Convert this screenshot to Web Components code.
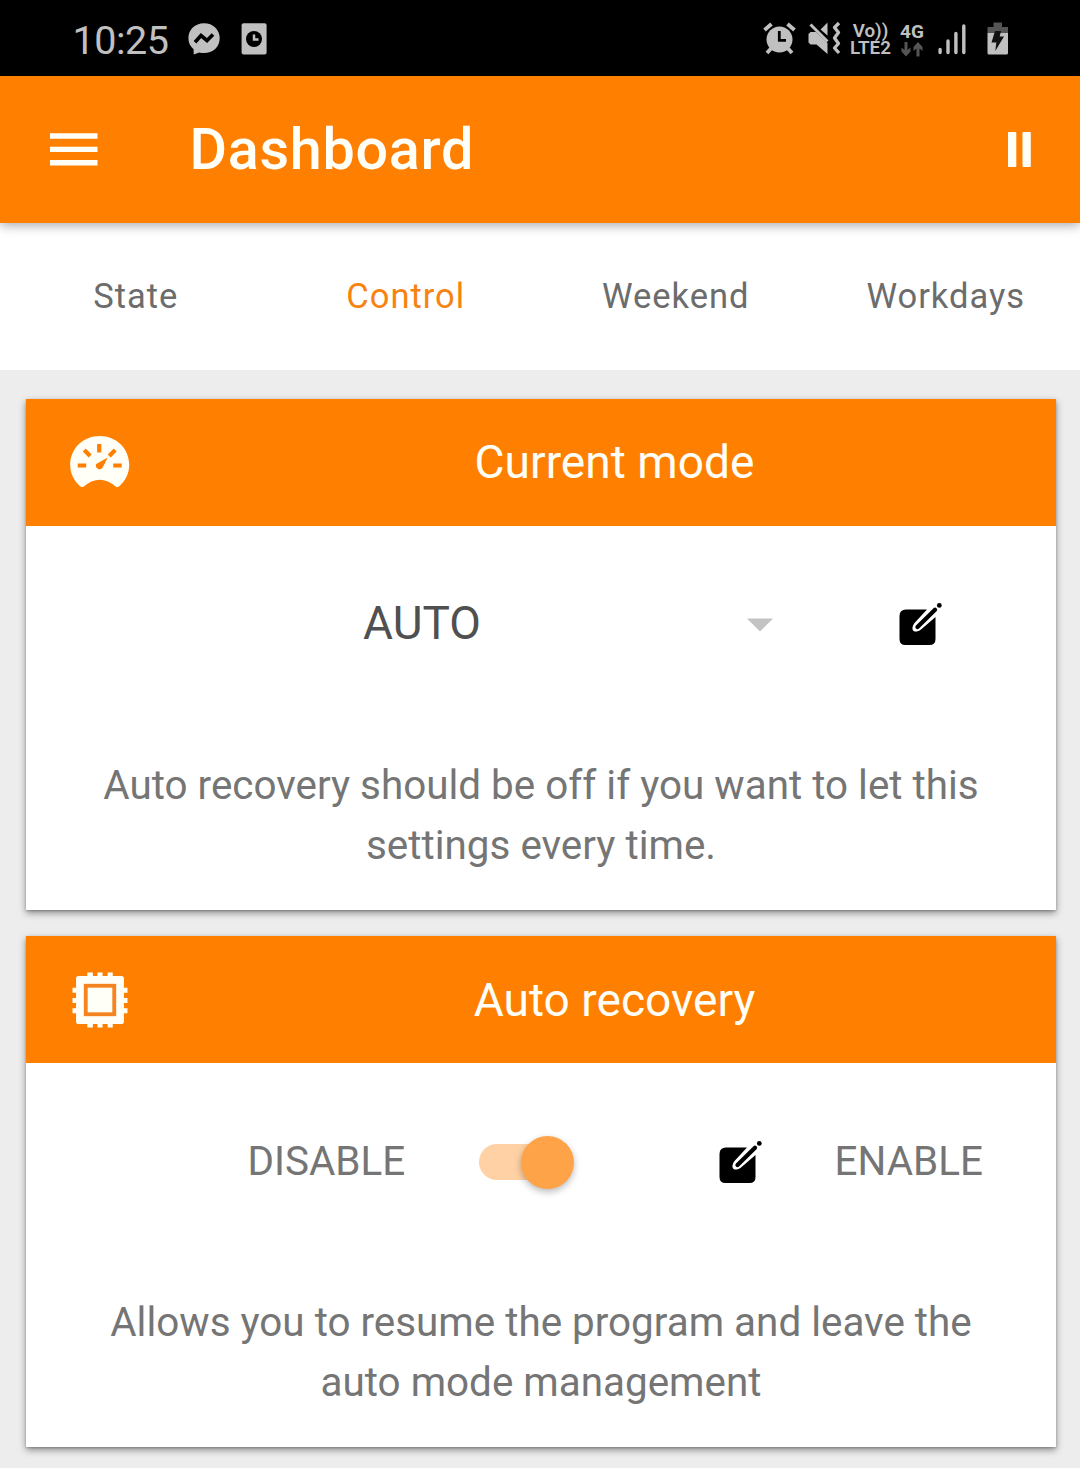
<!DOCTYPE html>
<html lang="en">
<head>
<meta charset="utf-8">
<title>Dashboard</title>
<style>
html,body{margin:0;padding:0}
body{width:1080px;height:1468px;overflow:hidden;background:#ededed;font-family:Roboto,"Liberation Sans",sans-serif}
</style>
</head>
<body>
<dashboard-app></dashboard-app>
<script>
const define = (name, html) => {
  const t = document.createElement('template');
  t.innerHTML = html;
  customElements.define(name, class extends HTMLElement {
    constructor() {
      super();
      this.attachShadow({ mode: 'open' }).appendChild(t.content.cloneNode(true));
    }
  });
};

define('status-bar', `
<style>
:host{display:flex;box-sizing:border-box;height:76px;background:#000;color:#c0c0c0;padding:0 70px 0 72.500px;align-items:flex-start}
.time{font-size:39.5px;line-height:46px;margin-top:18px;width:115.500px;letter-spacing:-.5px;white-space:nowrap}
svg{display:block;flex:none;margin-top:20px;fill:#c0c0c0}
.sp{flex:1}
.lte{width:45px;margin-left:6px;margin-top:23px;font-weight:600;font-size:18.800px;line-height:17px;text-align:center;white-space:pre}
.g{width:28px;margin-left:5px;margin-top:22px;font-weight:700;font-size:19px;line-height:19px;text-align:center}
.g svg{margin:1px auto 0;fill:#555}
</style>
<div class="time">10:25</div>
<svg width="32" height="36" viewBox="0 0 32 36"><path d="M16 3.3C7 3.3.4 9.7.4 18.3c0 4.4 2 8.3 5.200 11l.1 5.300 5.600-2.100c1.500.4 3.100.6 4.700.6 9 0 15.700-6.300 15.700-14.900S25 3.300 16 3.300z"/><path d="M7 22.300L13 15.500l6 5 6-6" fill="none" stroke="#000" stroke-width="3.600"/></svg>
<svg style="margin-left:21px" width="26" height="36" viewBox="0 0 26 36"><rect x=".6" y="3.300" width="25" height="31.300" rx="2"/><circle cx="13" cy="19" r="8" fill="#000"/><path d="M13 14.500V19.500H17.500" fill="none" stroke="#c0c0c0" stroke-width="2.500"/></svg>
<span class="sp"></span>
<svg width="33" height="36" viewBox="0 0 33 36"><circle cx="16.500" cy="19.500" r="13"/><path d="M1.500 10L8.500 4M31.500 10L24.500 4M4 33L8 28.500M29 33L25 28.500" fill="none" stroke="#c0c0c0" stroke-width="3.800"/><path d="M16.300 11V20.300H23" fill="none" stroke="#000" stroke-width="2.800"/></svg>
<svg style="margin-left:12px" width="34" height="36" viewBox="0 0 34 36"><path d="M2.500 12H8L19.500 23V34L8.500 24.500H2.500L.5 22.500V14zM12.500 9.500L19.500 2.500V15.500z"/><path d="M2.500 4.500L19.500 21.500" stroke="#c0c0c0" stroke-width="3"/><path d="M31 3L26.500 7.500L30.500 12.500L26.500 18L30.500 23.500L26.500 28L31 33" fill="none" stroke="#c0c0c0" stroke-width="3.300" stroke-linejoin="round"/></svg>
<div class="lte">Vo))
LTE2</div>
<div class="g">4G<svg width="24" height="15" viewBox="0 0 24 15"><path d="M4.500 0h3v8l3-2.500v4L6 14.500 1.500 9.500v-4l3 2.500zM16.500 14.500h3v-8l3 2.500V5L18 0 13.500 5v4l3-2.500z"/></svg></div>
<svg style="margin-left:12px" width="28" height="36" viewBox="0 0 28 36"><path d="M2.100 29.500V32.500M10 21V32.500M17.900 13.500V32.500M25.800 6V32.500" stroke="#c0c0c0" stroke-width="3.400" stroke-linecap="round"/></svg>
<svg style="margin-left:21px;margin-right:1px" width="22" height="36" viewBox="0 0 22 36"><path fill="#555" d="M6.500 2.500H15V7H21V13H.5V7H6.500z"/><path d="M.5 13H21V33Q21 34.500 19.500 34.500H2Q.5 34.500 .5 33z"/><path fill="#111" d="M8 11H14L12.700 16.500H17L8.300 31L9.300 22.500H4.500z"/></svg>
`);

define('app-bar', `
<style>
:host{display:flex;box-sizing:border-box;height:147px;align-items:center;background:#ff8000;color:#fffff8;padding:0 48px 0 50px;position:relative;z-index:2;box-shadow:0 2px 11px rgba(0,0,0,.36)}
h1{margin:0 auto 0 91.500px;font-size:57.500px;font-weight:500;line-height:70px;letter-spacing:.7px}
svg{display:block;fill:#fffff8}
</style>
<svg width="48" height="34" viewBox="0 .3 48 34"><path d="M0 .6h47.500v5.500H0zM0 14h47.500v5.300H0zM0 27.200h47.500V32.700H0z"/></svg>
<h1><slot></slot></h1>
<svg width="25" height="36" viewBox="0 .5 25 36"><rect x="1" y=".5" width="8.300" height="35" rx="1"/><rect x="15.500" y=".5" width="8.300" height="35" rx="1"/></svg>
`);

define('tab-bar', `
<style>:host{display:grid;grid-template-columns:repeat(4,1fr);height:147px;background:#fff}</style><slot></slot>`);

define('tab-item', `
<style>:host{display:flex;align-items:center;justify-content:center;color:#6c6c6c;font-size:34.500px;letter-spacing:1px;padding:0 0 2px 1.500px}
:host([active]){color:#f78311}</style><slot></slot>`);

define('info-card', `
<style>
:host{display:block;width:1030px;height:511px;background:#fff;box-shadow:0 3px 7px rgba(0,0,0,.42),0 1px 2px rgba(0,0,0,.2)}
header{display:flex;align-items:center;height:127px;background:#ff8000;color:#fffff8;font-size:46.100px}
.icon{width:147px;display:flex;justify-content:center}
.title{flex:1;text-align:center;padding-bottom:var(--title-lift,0)}
.row{display:flex;align-items:center;height:196px}
p{margin:34px 0 0;text-align:center;font-size:40.400px;line-height:60px;color:#757575}
</style>
<header><div class="icon"><slot name="icon"></slot></div><div class="title"><slot name="title"></slot></div></header>
<div class="row"><slot name="controls"></slot></div>
<p><slot></slot></p>`);

define('gauge-icon', `
<style>:host{display:block;margin-bottom:3px}svg{display:block}</style>
<svg width="60" height="60" viewBox=".3 0 60 60"><path fill="#fffff8" d="M11.500 56C4 50 .500 42 .500 34C.500 17.500 13.500 5 30 5S59.500 17.500 59.500 34C59.500 42 56 50 48.500 56H46.500Q30 41.500 13.500 56z"/><path fill="none" stroke="#ff8000" stroke-width="4.200" d="M29.500 13V21.500M8 34.500H16.500M43.500 34.500H52M14.500 19L20.500 25M45.500 19L39.500 25"/><path fill="#ff8000" d="M38 26.500L33 36.500C30.500 40.500 24.500 37 26.500 33z"/></svg>`);

define('chip-icon', `
<style>:host{display:block}svg{display:block}</style>
<svg width="56" height="56" viewBox=".5 .5 55 55"><path fill="#fffff8" d="M7 4.500h8.500V1h5.500v3.500h4.500V1h5v3.500h5V1h5v3.500H49Q51.500 4.500 51.500 7v9H55v5h-3.500v5H55v5h-3.500v5H55v5h-3.500v8Q51.500 51.500 49 51.500h-8.500V55h-5v-3.500h-5V55h-5v-3.500H21V55h-5.500v-3.500H7Q4.500 51.500 4.500 49v-8H1v-5h3.500v-5H1v-5h3.500v-5H1v-5h3.500V7Q4.500 4.500 7 4.500z"/><rect x="14" y="14" width="28" height="28" fill="none" stroke="#f58420" stroke-width="3.800"/></svg>`);

define('edit-icon', `
<style>:host{display:block}svg{display:block}</style>
<svg width="44" height="44" viewBox="0 0 44 44"><path d="M7 7.500H28L15.500 21C10.500 28 15.500 32.500 22 27.500L36.500 15V37Q36.500 43 30.500 43H6.500Q.500 43 .500 37V14Q.500 7.500 7 7.500z"/><path d="M18.500 25L36 7.800" stroke="#000" stroke-width="4.300" stroke-linecap="round"/><circle cx="40.300" cy="3.400" r="2.400"/></svg>`);

define('mode-select', `
<style>:host{display:flex;align-items:center;color:#505050;font-size:46px}
span{flex:1;padding-bottom:2px}svg{display:block;fill:#c3c3c3;margin-top:2px}</style>
<span><slot></slot></span><svg width="28" height="14" viewBox="0 0 28 14"><path d="M1 .5H27L14 13.500z"/></svg>`);

define('toggle-switch', `
<style>:host{display:flex;align-items:center;width:95px;height:54px;padding-top:3px}
.track{flex:1;height:36px;background:#ffd1a4;border-radius:18px 0 0 18px;margin:-1px -27px 0 0}
.knob{width:53.500px;height:53.500px;border-radius:50%;background:#ffa348;box-shadow:0 3px 7px rgba(0,0,0,.27)}</style>
<div class="track"></div><div class="knob"></div>`);

define('text-label', `
<style>:host{display:block;font-size:40.400px;color:#757575;white-space:nowrap}</style><slot></slot>`);

define('dashboard-app', `
<style>
:host{display:block}
main{display:flex;flex-direction:column;gap:26px;padding:29px 24px 21px 26px}
[slot=controls]{display:flex;align-items:center;flex:1}
</style>
<status-bar></status-bar>
<app-bar>Dashboard</app-bar>
<tab-bar><tab-item>State</tab-item><tab-item active>Control</tab-item><tab-item>Weekend</tab-item><tab-item>Workdays</tab-item></tab-bar>
<main>
<info-card style="--title-lift:2px">
<gauge-icon slot="icon"></gauge-icon><span slot="title">Current mode</span>
<div slot="controls"><mode-select style="margin-left:337px;width:411px">AUTO</mode-select><edit-icon style="margin-left:124.500px"></edit-icon></div>
Auto recovery should be off if you want to let this<br>settings every time.
</info-card>
<info-card>
<chip-icon slot="icon"></chip-icon><span slot="title">Auto recovery</span>
<div slot="controls"><text-label style="width:235px;margin-left:218px;text-indent:3.500px">DISABLE</text-label><toggle-switch></toggle-switch><edit-icon style="margin-left:145px;padding-top:2px"></edit-icon><text-label style="margin-left:71.500px">ENABLE</text-label></div>
Allows you to resume the program and leave the<br>auto mode management
</info-card>
</main>`);
</script>
</body>
</html>
